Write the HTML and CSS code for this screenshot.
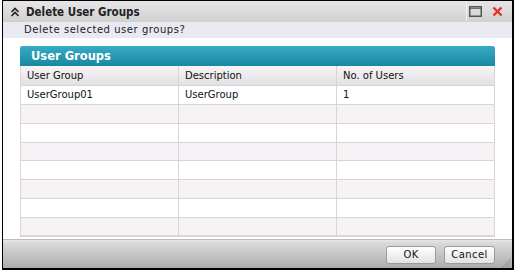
FILE: index.html
```html
<!DOCTYPE html>
<html>
<head>
<meta charset="utf-8">
<link rel="stylesheet" href="styles.css">
</head>
<body>
<div class="dialog">
  <div class="titlebar">
    <svg class="chev" width="10" height="10" viewBox="0 0 10 10"><path d="M1.5 5 L5 1.5 L8.5 5 M1.5 9 L5 5.5 L8.5 9" fill="none" stroke="#222" stroke-width="1.6"/></svg>
    <span class="title">Delete User Groups</span>
    <span class="spacer"></span>
    <span class="sep"></span>
    <svg class="maxi" width="13" height="11" viewBox="0 0 13 11"><rect x="0.75" y="0.75" width="11.5" height="9.5" fill="none" stroke="#555" stroke-width="1.5"/><line x1="1" y1="2.3" x2="12" y2="2.3" stroke="#555" stroke-width="1"/></svg>
    <svg class="close" width="11" height="11" viewBox="0 0 11 11"><path d="M1.5 1.5 L9.5 9.5 M9.5 1.5 L1.5 9.5" stroke="#e0302a" stroke-width="2.4"/></svg>
  </div>
  <div class="prompt">Delete selected user groups?</div>
  <div class="content">
    <div class="panel">
      <div class="panel-head">User Groups</div>
      <div class="grid">
        <div class="cell hd">User Group</div><div class="cell hd">Description</div><div class="cell hd">No. of Users</div>
        <div class="cell">UserGroup01</div><div class="cell">UserGroup</div><div class="cell">1</div>
        <div class="cell alt"></div><div class="cell alt"></div><div class="cell alt"></div>
        <div class="cell"></div><div class="cell"></div><div class="cell"></div>
        <div class="cell alt"></div><div class="cell alt"></div><div class="cell alt"></div>
        <div class="cell"></div><div class="cell"></div><div class="cell"></div>
        <div class="cell alt"></div><div class="cell alt"></div><div class="cell alt"></div>
        <div class="cell"></div><div class="cell"></div><div class="cell"></div>
        <div class="cell alt"></div><div class="cell alt"></div><div class="cell alt"></div>
      </div>
    </div>
  </div>
  <div class="footer">
    <button class="btn ok">OK</button>
    <button class="btn cancel">Cancel</button>
    <svg class="grip" width="10" height="10" viewBox="0 0 10 10"><path d="M9.5 1.5 L1.5 9.5 M9.5 4.5 L4.5 9.5 M9.5 7.5 L7.5 9.5" stroke="#888" stroke-width="1"/></svg>
  </div>
</div>
</body>
</html>
```
FILE: styles.css
```css
* { box-sizing: border-box; }
html, body { margin: 0; padding: 0; background: #fff; }
body { font-family: "DejaVu Sans", Verdana, sans-serif; font-size: 10px; color: #111; }
.dialog {
  width: 512px; height: 270px; margin-left: 2px;
  border: 1px solid #000; border-right-width: 2px; border-bottom-width: 2px;
  display: flex; flex-direction: column; background: #fff;
}
.titlebar {
  height: 22px; display: flex; align-items: center; padding: 0 9px 0 7px;
  background: linear-gradient(#e6e6e6, #d0d0d0);
}
.chev { margin-right: 6px; }
.title { font-family: "DejaVu Sans Condensed", "DejaVu Sans", sans-serif; font-weight: bold; font-size: 11.5px; color: #222; }
.spacer { flex: 1; }
.sep { width: 1px; height: 18px; background: #f2f2f2; margin-right: 2px; }
.maxi { margin-right: 10px; }
.prompt {
  height: 16px; line-height: 16px; padding-left: 21px;
  background: #e9e9f1; font-size: 10px; color: #222; letter-spacing: 0.55px;
}
.content { flex: 1; padding: 8px 17px 2px 17px; }
.panel { border: 1px solid #d6d6d6; border-top: none; }
.panel-head {
  height: 20px; line-height: 20px; padding-left: 11px;
  background: linear-gradient(#36abc6, #1a879f);
  color: #fff; font-weight: bold; font-size: 11.5px;
  border-radius: 3px 3px 0 0; margin: 0 -1px;
}
.grid {
  display: grid; grid-template-columns: 158px 158px 1fr;
  grid-template-rows: 20px 19px 19px 19px 18px 19px 19px 19px 18px;
}
.cell { line-height: 18px; padding-left: 6px; border-right: 1px solid #d6d6d6; border-bottom: 1px solid #d6d6d6; }
.cell:nth-child(3n) { border-right: none; }
.cell.hd { background: linear-gradient(#f7f5f7, #e2e0e2); line-height: 19px; }
.cell.alt { background: #f6f2f5; }
.footer {
  height: 30px; display: flex; align-items: center; justify-content: flex-end;
  padding: 1px 17px 0 0; gap: 8px; position: relative;
  background: linear-gradient(#e8e8e8 0, #dadada 3px, #c9c9c9 45%, #ababab);
  border-top: 1px solid #bcbcbc;
}
.btn {
  font-family: "DejaVu Sans", Verdana, sans-serif; font-size: 10px; color: #111;
  height: 18px; border: 1px solid #9a9a9a; border-radius: 3px; letter-spacing: 0.4px;
  background: linear-gradient(#ffffff, #e2e2e2); padding: 0;
}
.ok { width: 50px; }
.cancel { width: 51px; }
.grip { position: absolute; right: 1px; bottom: 0px; }
```
